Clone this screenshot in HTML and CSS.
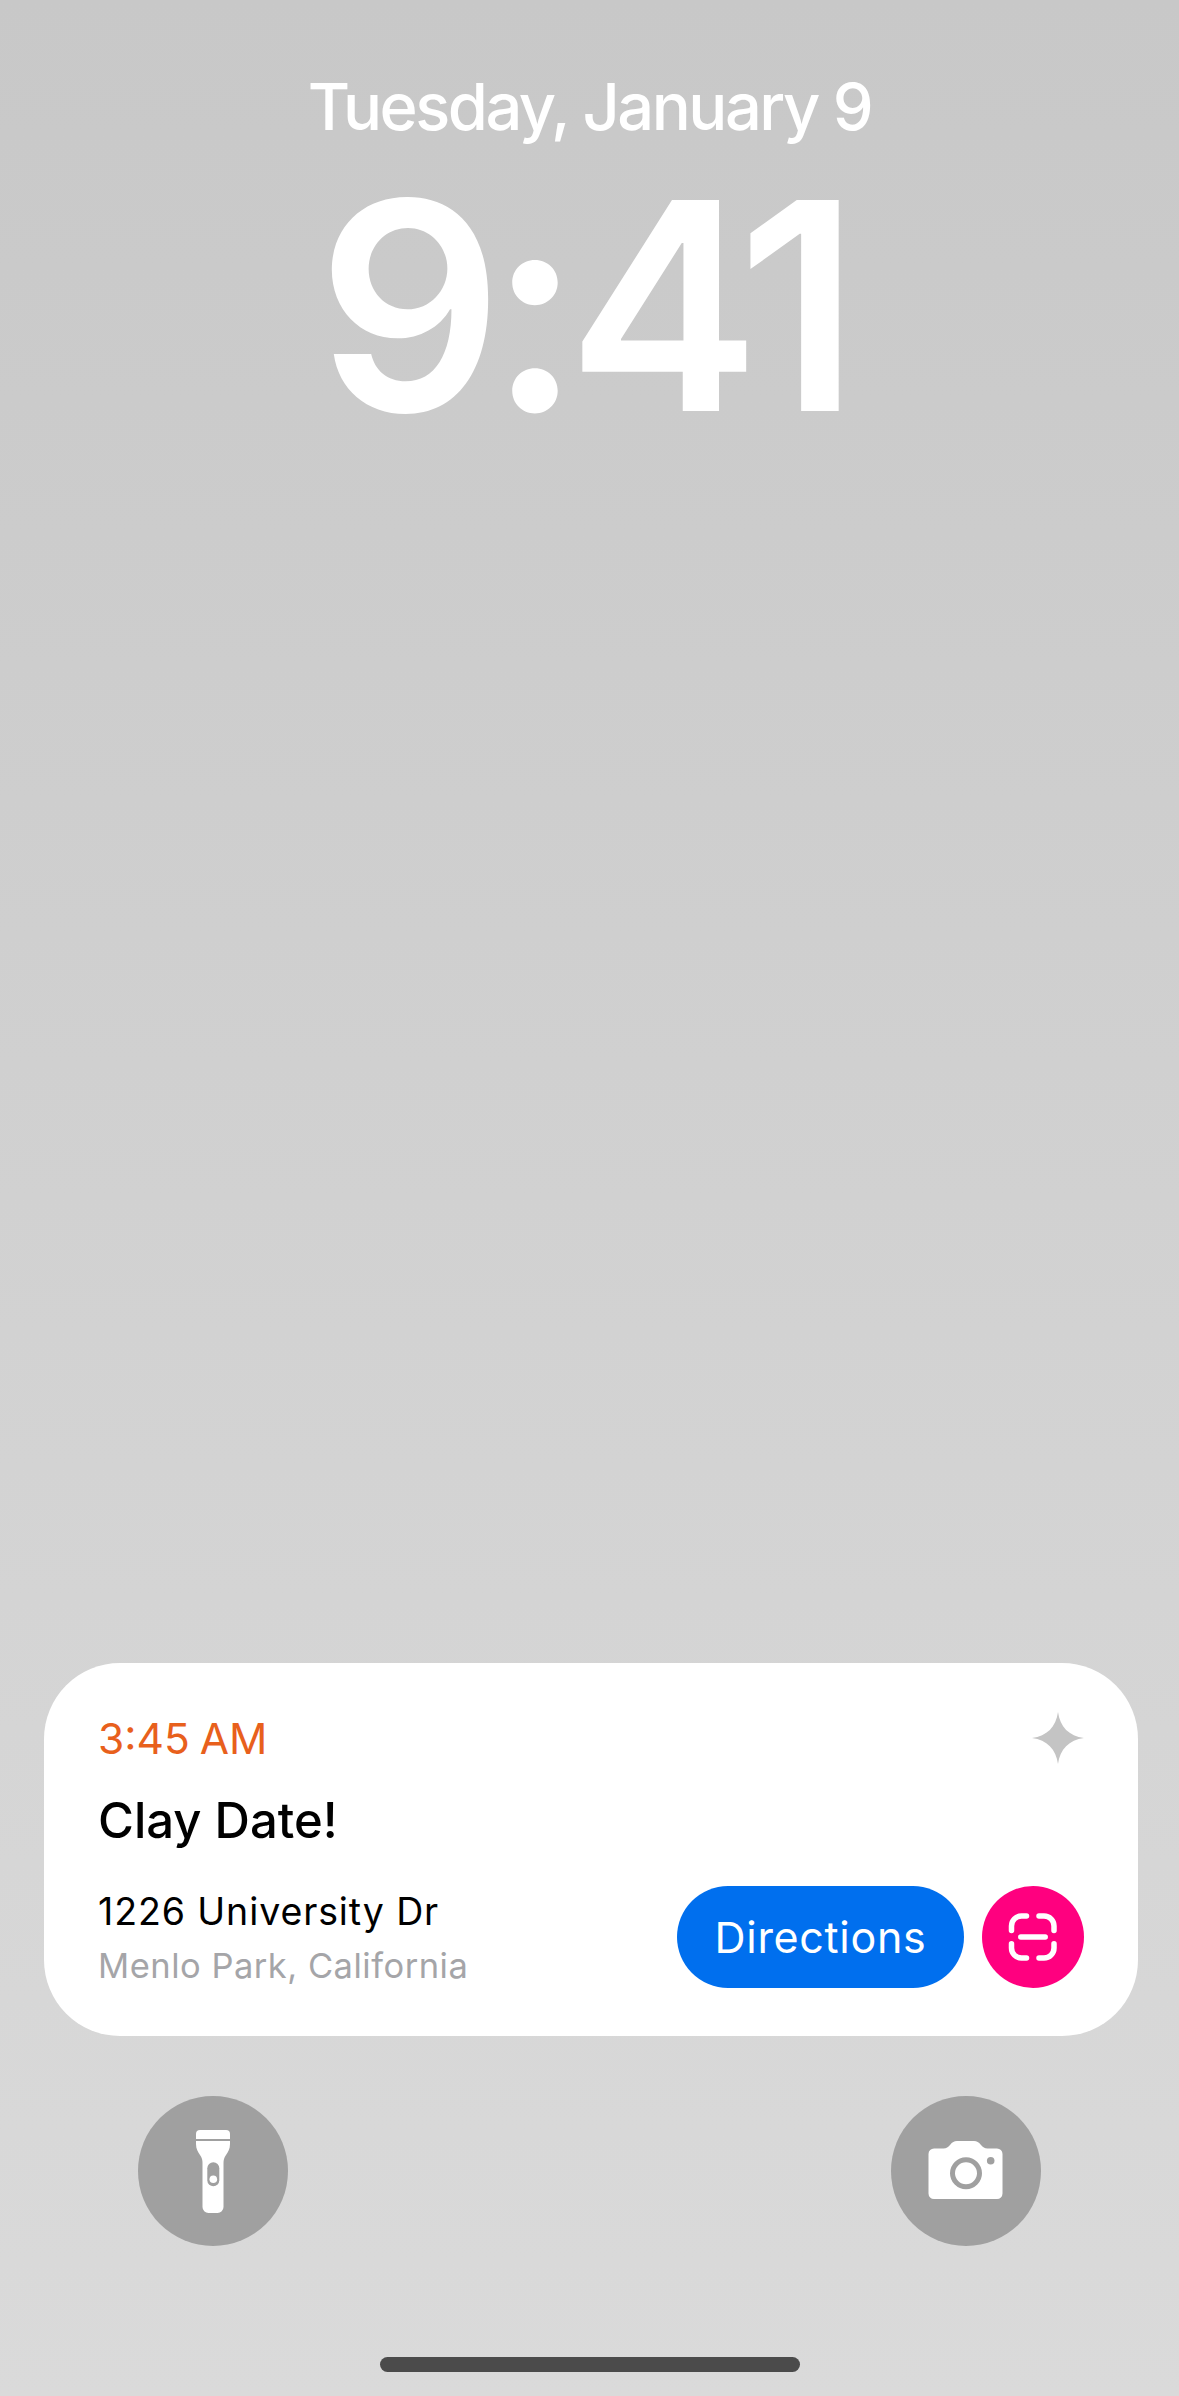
FILE: index.html
```html
<!DOCTYPE html>
<html lang="en">

<head>
    <meta charset="UTF-8">
    <title>Lock Screen</title>
    <link rel="stylesheet" href="styles.css">
</head>

<body>
    <div class="screen">
        <div class="lock-head">
            <div class="lock-date">Tuesday, January 9</div>
            <div class="lock-time">9:41</div>
        </div>

        <div class="card">
            <div class="card-top">
                <div class="card-time">3:45 AM</div>
                <svg class="sparkle" viewBox="0 0 52 52">
                    <path d="M26 0C28 15 37 24 52 26C37 28 28 37 26 52C24 37 15 28 0 26C15 24 24 15 26 0Z" />
                </svg>
            </div>
            <div class="card-title">Clay Date!</div>
            <div class="card-bottom">
                <div class="address">
                    <div class="street">1226 University Dr</div>
                    <div class="city">Menlo Park, California</div>
                </div>
                <div class="actions">
                    <button class="btn-directions">Directions</button>
                    <button class="btn-scan">
                        <svg viewBox="0 0 102 102">
                            <path d="M29.500 44.500V40a10 10 0 0 1 10-10h5M57 30h5a10 10 0 0 1 10 10v4.500M72 57.800V62a10 10 0 0 1-10 10h-5M44.500 72h-5a10 10 0 0 1-10-10v-4.200M38.800 51h24.400" />
                        </svg>
                    </button>
                </div>
            </div>
        </div>

        <div class="controls">
            <div class="round-btn">
                <svg viewBox="0 0 150 150">
                    <path class="solid" d="M58 38a4 4 0 0 1 4-4h26a4 4 0 0 1 4 4v5H58z" />
                    <path class="solid" d="M58 45h34v3c0 5-2 8-4 11-2 3-2.500 5-2.500 8v44a6 6 0 0 1-6 6h-9a6 6 0 0 1-6-6V67c0-3-.5-5-2.500-8-2-3-4-6-4-11z" />
                    <rect class="cut" x="69.300" y="66.300" width="12" height="24" rx="6" />
                    <circle class="solid" cx="75.300" cy="83.300" r="3.800" />
                </svg>
            </div>
            <div class="round-btn">
                <svg viewBox="0 0 150 150">
                    <path class="solid" d="M43 52.500h9.500c3 0 4.500-1.200 6.500-3.500 2.500-3 4-4 7-4h17c3 0 4.500 1 7 4 2 2.300 3.500 3.500 6.500 3.500H106a5.500 5.500 0 0 1 5.500 5.500v39.500a5.500 5.500 0 0 1-5.500 5.500H43a5.500 5.500 0 0 1-5.500-5.500V58a5.500 5.500 0 0 1 5.500-5.500z" />
                    <circle class="ring" cx="75" cy="77.300" r="13.500" />
                    <circle class="cut" cx="99.700" cy="64.700" r="3.800" />
                </svg>
            </div>
        </div>

        <div class="home-bar"></div>
    </div>
</body>

</html>
```

FILE: styles.css
```css
* {
    box-sizing: border-box;
}

body {
    margin: 0;
    font-family: Inter, "Liberation Sans", sans-serif;
}

.screen {
    display: flex;
    flex-direction: column;
    width: 1179px;
    height: 2396px;
    overflow: hidden;
    background: linear-gradient(#c8c8c8, #dadada);
}

.lock-head {
    padding-top: 67px;
    text-align: center;
    color: #fff;
}

.lock-date {
    font-size: 65px;
    line-height: 80px;
    font-weight: 500;
    letter-spacing: -2.500px;
}

.lock-time {
    margin-top: 29px;
    padding-right: 16px;
    font-size: 290px;
    line-height: 260px;
    font-weight: 600;
    letter-spacing: -14px;
}

.card {
    margin: auto 41px 0 44px;
    padding: 51px 54px 47px 54px;
    background-color: #fff;
    border-radius: 76px;
}

.card-top {
    display: flex;
    justify-content: space-between;
    align-items: flex-start;
}

.card-time {
    font-size: 42.500px;
    line-height: 50px;
    word-spacing: -2px;
    color: #e8601c;
}

.sparkle {
    width: 52px;
    height: 52px;
    margin: -2px 0;
    fill: #c4c4c4;
}

.card-title {
    margin-top: 26.500px;
    font-size: 49px;
    line-height: 60px;
    font-weight: 500;
    color: #000;
}

.card-bottom {
    display: flex;
    justify-content: space-between;
    align-items: flex-start;
    margin-top: 35.500px;
}

.address {
    padding-top: 3px;
}

.street {
    font-size: 37.500px;
    line-height: 46px;
    letter-spacing: 0.900px;
    color: #000;
}

.city {
    margin-top: 7.700px;
    font-size: 34.500px;
    line-height: 46px;
    letter-spacing: 0.500px;
    color: #a5a5a8;
}

.actions {
    display: flex;
    gap: 18px;
}

button {
    height: 102px;
    padding: 0;
    border: none;
    color: #fff;
    font-family: inherit;
}

.btn-directions {
    width: 287px;
    font-size: 43px;
    letter-spacing: 0.700px;
    background-color: #006fee;
    border-radius: 51px;
}

.btn-scan {
    width: 102px;
    background-color: #ff007f;
    border-radius: 50%;
}

.btn-scan svg {
    display: block;
    width: 102px;
    height: 102px;
    fill: none;
    stroke: #fff;
    stroke-width: 5.500;
    stroke-linecap: round;
}

.controls {
    display: flex;
    justify-content: space-between;
    margin-top: 60px;
    padding: 0 138px;
}

.round-btn {
    width: 150px;
    height: 150px;
    background-color: #a0a0a0;
    border-radius: 50%;
}

.round-btn svg {
    display: block;
    width: 150px;
    height: 150px;
}

.solid {
    fill: #fff;
}

.cut {
    fill: #a0a0a0;
}

.ring {
    fill: #fff;
    stroke: #a0a0a0;
    stroke-width: 5;
}

.home-bar {
    width: 420px;
    height: 15px;
    margin: 111px auto 24px;
    background-color: #4b4b4b;
    border-radius: 8px;
}
```
